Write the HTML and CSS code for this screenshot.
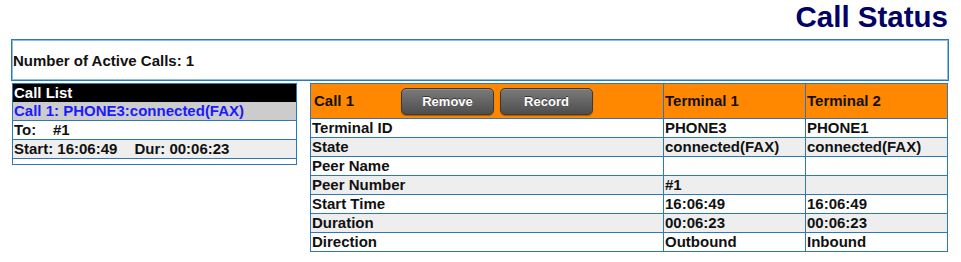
FILE: index.html
```html
<!DOCTYPE html>
<html>
<head>
<meta charset="utf-8">
<title>Call Status</title>
<link rel="stylesheet" href="styles.css">
</head>
<body>
<div class="page">
  <h1 class="title">Call Status</h1>
  <div class="active-box">Number of Active Calls: 1</div>
  <div class="content">
    <div class="call-list">
      <div class="cl-head">Call List</div>
      <div class="cl-call">Call 1: PHONE3:connected(FAX)</div>
      <div class="cl-row cl-white"><span class="cl-label">To:</span>#1</div>
      <div class="cl-row cl-grey"><span class="cl-start">Start: 16:06:49</span>Dur: 00:06:23</div>
      <div class="cl-row cl-empty"></div>
    </div>
    <table class="call-table">
      <colgroup>
        <col class="c1">
        <col class="c2">
        <col class="c3">
      </colgroup>
      <tr class="head">
        <th>
          <div class="head-cell">
            <span class="call-name">Call 1</span>
            <button class="btn">Remove</button>
            <button class="btn">Record</button>
          </div>
        </th>
        <th>Terminal 1</th>
        <th>Terminal 2</th>
      </tr>
      <tr><td>Terminal ID</td><td>PHONE3</td><td>PHONE1</td></tr>
      <tr class="alt"><td>State</td><td>connected(FAX)</td><td>connected(FAX)</td></tr>
      <tr><td>Peer Name</td><td></td><td></td></tr>
      <tr class="alt"><td>Peer Number</td><td>#1</td><td></td></tr>
      <tr><td>Start Time</td><td>16:06:49</td><td>16:06:49</td></tr>
      <tr class="alt"><td>Duration</td><td>00:06:23</td><td>00:06:23</td></tr>
      <tr><td>Direction</td><td>Outbound</td><td>Inbound</td></tr>
    </table>
  </div>
</div>
</body>
</html>
```

FILE: styles.css
```css
html, body {
  margin: 0;
  padding: 0;
  background: #ffffff;
}

body {
  font-family: "Liberation Sans", Arial, sans-serif;
  font-weight: bold;
  font-size: 15px;
  color: #111111;
}

.page {
  padding: 0 12px 0 11px;
}

.title {
  margin: 0;
  text-align: right;
  font-size: 29.5px;
  line-height: 34px;
  height: 34px;
  color: #000066;
  padding-right: 1px;
}

.active-box {
  margin-top: 5px;
  height: 38px;
  border: 1px solid #2f78b8;
  box-shadow: inset 0 0 0 1px #93bde0;
  padding: 1px 1px;
  display: flex;
  align-items: center;
  font-size: 15px;
}

.content {
  display: flex;
  align-items: flex-start;
  gap: 13px;
  margin-top: 2px;
  padding-left: 1px;
}

.call-list {
  width: 283px;
  border: 1px solid #2f78b8;
  line-height: 18px;
}

.cl-head {
  background: #000000;
  color: #ffffff;
  padding-left: 1px;
  height: 18px;
}

.cl-call {
  background: #cccccc;
  color: #1a1aff;
  padding-left: 1px;
  height: 18px;
}

.cl-row {
  border-top: 1px solid #2f78b8;
  padding-left: 1px;
  height: 18px;
}

.cl-white {
  background: #ffffff;
}

.cl-grey {
  background: #eeeeee;
}

.cl-empty {
  height: 5px;
}

.cl-label {
  display: inline-block;
  width: 39px;
}

.cl-start {
  margin-right: 17px;
}

.call-table {
  border-collapse: collapse;
  table-layout: fixed;
  width: 637px;
  border: 1px solid #2f78b8;
}

.c1 { width: 353px; }
.c2 { width: 142px; }
.c3 { width: 142px; }

.call-table th,
.call-table td {
  border: 1px solid #2f78b8;
  padding: 0 0 0 1px;
  text-align: left;
  height: 18px;
  line-height: 18px;
  white-space: nowrap;
  overflow: hidden;
}

.call-table tr.head th {
  background: #ff8800;
  height: 34px;
  font-weight: bold;
}

.call-table tr.head th:first-child {
  padding-left: 3px;
}

.call-table tr.alt td {
  background: #eeeeee;
}

.head-cell {
  display: flex;
  align-items: center;
  gap: 6px;
}

.call-name {
  width: 81px;
}

.btn {
  width: 93px;
  height: 27px;
  border: 1px solid #3a3a3a;
  border-radius: 5px;
  background: linear-gradient(#7a7a7a, #4e4e4e);
  box-shadow: 0 1px 1px rgba(0, 0, 0, 0.35), inset 0 1px 0 rgba(255, 255, 255, 0.15);
  color: #ffffff;
  font-family: "Liberation Sans", Arial, sans-serif;
  font-weight: bold;
  font-size: 13px;
  text-shadow: 0 -1px 0 rgba(0, 0, 0, 0.5);
  padding: 0;
  cursor: pointer;
}
```
